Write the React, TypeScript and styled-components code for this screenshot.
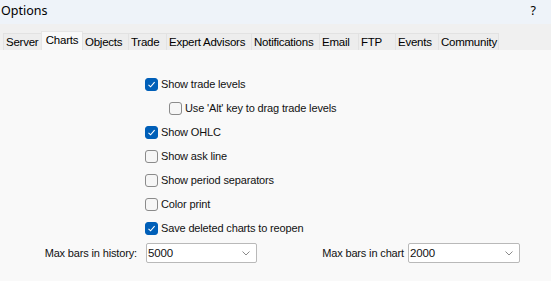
import React from "react";
import styled, { createGlobalStyle } from "styled-components";

const Global = createGlobalStyle`
  html, body { margin: 0; padding: 0; background: #f9f9f9; }
  body { font-family: "Liberation Sans", Arial, sans-serif; }
`;

const Window = styled.div`
  width: 551px;
  height: 281px;
  display: flex;
  flex-direction: column;
  background: #f9f9f9;
  color: #111;
  font-family: "Liberation Sans", Arial, sans-serif;
  font-size: 11px;
  letter-spacing: -0.15px;
  overflow: hidden;
`;

const TitleBar = styled.div`
  height: 24px;
  flex: none;
  display: flex;
  align-items: center;
  justify-content: space-between;
  background: #eef3f9;
  padding: 0 15px 4px 1px;
  box-sizing: border-box;
  font-family: "Noto Sans", "Open Sans", sans-serif;
  font-size: 12.5px;
  letter-spacing: 0;
  color: #000;
`;

const TabStrip = styled.div`
  height: 26px;
  flex: none;
  display: flex;
  align-items: flex-end;
  background: #f0f0f0;
  padding-left: 3px;
  box-sizing: border-box;
`;

const Tab = styled.div<{ $w: number; $active?: boolean }>`
  width: ${(p) => p.$w}px;
  height: ${(p) => (p.$active ? 19 : 17)}px;
  box-sizing: border-box;
  display: flex;
  align-items: center;
  justify-content: ${(p) => (p.$active ? "center" : "flex-start")};
  padding: ${(p) => (p.$active ? "0 0 2px" : "0 0 0 2px")};
  background: ${(p) => (p.$active ? "#f9f9f9" : "#ededed")};
  border: 1px solid ${(p) => (p.$active ? "#e6e6e6" : "#e2e2e2")};
  border-bottom: none;
  margin-right: -1px;
  font-size: 11.5px;
  letter-spacing: -0.25px;
  color: #000;
  white-space: nowrap;
`;

const Panel = styled.div`
  flex: 1;
  background: #f9f9f9;
  padding-top: 22px;
  display: flex;
  flex-direction: column;
`;

const List = styled.div`
  display: flex;
  flex-direction: column;
  padding-left: 145px;
`;

const Row = styled.label<{ $indent?: boolean }>`
  height: 24px;
  display: flex;
  align-items: center;
  gap: 3px;
  padding-left: ${(p) => (p.$indent ? 24 : 0)}px;
  white-space: nowrap;
`;

const Box = styled.span<{ $checked?: boolean }>`
  width: 13px;
  height: 13px;
  box-sizing: border-box;
  border-radius: 3px;
  flex: none;
  display: flex;
  align-items: center;
  justify-content: center;
  background: ${(p) => (p.$checked ? "#005fb8" : "#f6f6f6")};
  border: 1px solid ${(p) => (p.$checked ? "#005fb8" : "#8b8b8b")};
`;

const Footer = styled.div`
  margin-top: 3px;
  display: grid;
  grid-template-columns: 146px 111px 151px 112px;
  align-items: center;
`;

const FieldLabel = styled.span<{ $gap: number }>`
  text-align: right;
  padding-right: ${(p) => p.$gap}px;
  white-space: nowrap;
`;

const Select = styled.div`
  height: 20px;
  box-sizing: border-box;
  border: 1px solid #b9b9b9;
  border-radius: 2px;
  background: #fff;
  display: flex;
  align-items: center;
  justify-content: space-between;
  padding: 0 6px 0 1px;
  font-size: 11.5px;
`;

const Check = () => (
  <svg width="9" height="9" viewBox="0 0 9 9">
    <path d="M1.5 4.8 L3.6 6.8 L7.6 2.2" fill="none" stroke="#fff" strokeWidth="1.1" />
  </svg>
);

const Chevron = () => (
  <svg width="8" height="5" viewBox="0 0 8 5">
    <path d="M0.5 0.5 L4 4 L7.5 0.5" fill="none" stroke="#8a8a8a" strokeWidth="1" />
  </svg>
);

const tabs: [string, number][] = [
  ["Server", 39],
  ["Charts", 42],
  ["Objects", 47],
  ["Trade", 39],
  ["Expert Advisors", 86],
  ["Notifications", 69],
  ["Email", 40],
  ["FTP", 38],
  ["Events", 44],
  ["Community", 61],
];

const options: { label: string; checked: boolean; indent?: boolean }[] = [
  { label: "Show trade levels", checked: true },
  { label: "Use 'Alt' key to drag trade levels", checked: false, indent: true },
  { label: "Show OHLC", checked: true },
  { label: "Show ask line", checked: false },
  { label: "Show period separators", checked: false },
  { label: "Color print", checked: false },
  { label: "Save deleted charts to reopen", checked: true },
];

export default function App() {
  return (
    <>
      <Global />
      <Window>
        <TitleBar>
          <span>Options</span>
          <span>?</span>
        </TitleBar>
        <TabStrip>
          {tabs.map(([t, w]) => (
            <Tab key={t} $w={w} $active={t === "Charts"}>
              {t}
            </Tab>
          ))}
        </TabStrip>
        <Panel>
          <List>
            {options.map((o) => (
              <Row key={o.label} $indent={o.indent}>
                <Box $checked={o.checked}>{o.checked && <Check />}</Box>
                <span>{o.label}</span>
              </Row>
            ))}
          </List>
          <Footer>
            <FieldLabel $gap={9}>Max bars in history:</FieldLabel>
            <Select>
              <span>5000</span>
              <Chevron />
            </Select>
            <FieldLabel $gap={4}>Max bars in chart</FieldLabel>
            <Select>
              <span>2000</span>
              <Chevron />
            </Select>
          </Footer>
        </Panel>
      </Window>
    </>
  );
}
